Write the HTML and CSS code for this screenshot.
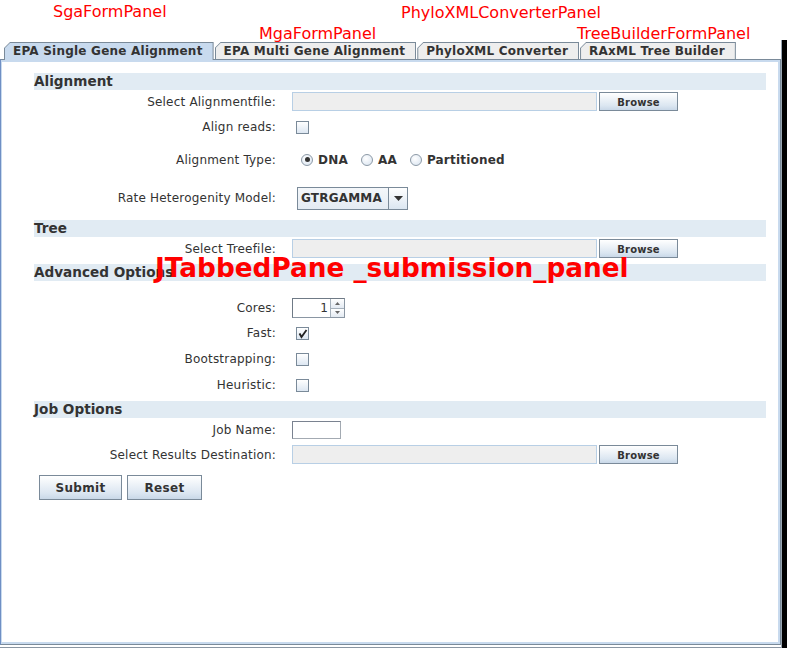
FILE: index.html
```html
<!DOCTYPE html>
<html>
<head>
<meta charset="utf-8">
<link rel="stylesheet" href="styles.css">
</head>
<body>
<div class="page">
  <div class="window">
    <div class="frame">
      <div class="tabbar">
        <div class="tab sel"><span>EPA Single Gene Alignment</span></div>
        <div class="tab"><span>EPA Multi Gene Alignment</span></div>
        <div class="tab"><span>PhyloXML Converter</span></div>
        <div class="tab"><span>RAxML Tree Builder</span></div>
      </div>
      <div class="panel">
        <div class="content">
          <div class="form">
            <div class="hdr h-align">Alignment</div>
            <div class="row r-file">
              <div class="lbl">Select Alignmentfile:</div>
              <div class="ctl"><div class="field"></div><div class="btn browse">Browse</div></div>
            </div>
            <div class="row r-align">
              <div class="lbl">Align reads:</div>
              <div class="ctl"><div class="cb"></div></div>
            </div>
            <div class="row r-type">
              <div class="lbl">Alignment Type:</div>
              <div class="ctl radios">
                <div class="radio on"><i></i><b>DNA</b></div>
                <div class="radio"><i></i><b>AA</b></div>
                <div class="radio"><i></i><b>Partitioned</b></div>
              </div>
            </div>
            <div class="row r-rate">
              <div class="lbl">Rate Heterogenity Model:</div>
              <div class="ctl">
                <div class="combo"><span class="combo-val">GTRGAMMA</span><span class="combo-arrow"><svg width="9" height="5" viewBox="0 0 9 5"><path d="M0 0 H9 L4.5 5 Z" fill="#333"/></svg></span></div>
              </div>
            </div>
            <div class="hdr h-tree">Tree</div>
            <div class="row r-file2">
              <div class="lbl">Select Treefile:</div>
              <div class="ctl"><div class="field"></div><div class="btn browse">Browse</div></div>
            </div>
            <div class="hdr h-adv">Advanced Options</div>
            <div class="row r-cores">
              <div class="lbl">Cores:</div>
              <div class="ctl">
                <div class="spinner">
                  <div class="spin-field">1</div>
                  <div class="spin-btns">
                    <div class="spin-b"><svg width="5" height="3" viewBox="0 0 5 3"><path d="M0 3 H5 L2.5 0 Z" fill="#666"/></svg></div>
                    <div class="spin-b"><svg width="5" height="3" viewBox="0 0 5 3"><path d="M0 0 H5 L2.5 3 Z" fill="#666"/></svg></div>
                  </div>
                </div>
              </div>
            </div>
            <div class="row r-fast">
              <div class="lbl">Fast:</div>
              <div class="ctl"><div class="cb"><svg width="11" height="11" viewBox="0 0 11 11"><path d="M2.5 5.5 L4.5 9 L9.5 2" fill="none" stroke="#222" stroke-width="1.8"/><path d="M2.5 5.5 L4 6 L4.6 8.8Z" fill="#222"/></svg></div></div>
            </div>
            <div class="row r-chk">
              <div class="lbl">Bootstrapping:</div>
              <div class="ctl"><div class="cb"></div></div>
            </div>
            <div class="row r-chk">
              <div class="lbl">Heuristic:</div>
              <div class="ctl"><div class="cb"></div></div>
            </div>
            <div class="hdr h-job">Job Options</div>
            <div class="row r-name">
              <div class="lbl">Job Name:</div>
              <div class="ctl"><div class="namefield"></div></div>
            </div>
            <div class="row r-dest">
              <div class="lbl">Select Results Destination:</div>
              <div class="ctl"><div class="field"></div><div class="btn browse">Browse</div></div>
            </div>
            <div class="actions">
              <div class="btn big submit">Submit</div>
              <div class="btn big reset">Reset</div>
            </div>
          </div>
        </div>
      </div>
    </div>
    <div class="dark"></div>
  </div>

  <div class="note n-sga">SgaFormPanel</div>
  <div class="note n-mga">MgaFormPanel</div>
  <div class="note n-phylo">PhyloXMLConverterPanel</div>
  <div class="note n-tree">TreeBuilderFormPanel</div>
  <div class="note-big">JTabbedPane _submission_panel</div>
</div>
</body>
</html>
```

FILE: styles.css
```css
* { box-sizing: border-box; }
html, body { margin: 0; padding: 0; background: #fff; }
body { font-family: "DejaVu Sans", "Noto Sans", sans-serif; color: #333; }

.page { position: relative; width: 787px; height: 648px; overflow: hidden; background: #fff; }

.window { display: flex; margin-top: 40px; height: 608px; }
.frame { width: 781px; display: flex; flex-direction: column; padding-top: 2px; padding-bottom: 2px; border-bottom: 1px solid #8a96a3; }
.dark { flex: 1; background: #000; border-left: 1px solid #9aa6b2; }

/* tabs */
.tabbar { display: flex; gap: 1px; padding-left: 4px; height: 18px; margin-bottom: -1px; position: relative; z-index: 1; }
.tab { height: 18px; background: #7a8a99; padding: 1px 1px 0 1px;
  clip-path: polygon(0 6px, 6px 0, 100% 0, 100% 100%, 0 100%); }
.tab span { display: block; height: 16px; background: #eeeeee; padding: 0 10px 0 8px;
  clip-path: polygon(0 5px, 5px 0, 100% 0, 100% 100%, 0 100%);
  font-weight: bold; font-size: 12px; line-height: 16px; letter-spacing: 0.22px; color: #333; white-space: nowrap; }
.tab.sel span { height: 17px; background: #c8daee; }

/* panel */
.panel { flex: 1; border: 1px solid #7a8a99; border-left-color: #6f8fc4; background: #c8daee; padding: 2px 2px 2px 1px; }
.content { background: #fff; height: 100%; padding-left: 32px; padding-top: 11px; }

.form { width: 732px; }

.hdr { height: 17px; background: #e1ebf3; font-weight: bold; font-size: 13.6px; line-height: 17px; color: #333; white-space: nowrap; }
.h-adv { margin-top: 6px; }
.h-job { margin-top: 3px; }

.row { display: grid; grid-template-columns: 242px 1fr; column-gap: 16px; align-items: center; }
.lbl { text-align: right; font-size: 12px; letter-spacing: 0.2px; color: #333; white-space: nowrap; }
.ctl { display: flex; align-items: center; }

.r-file { margin-top: 2px; height: 19px; }
.r-align { height: 32px; }
.r-type { height: 33px; }
.r-rate { height: 44px; }
.r-file2 { margin-top: 2px; height: 19px; }
.r-cores { margin-top: 17px; height: 19px; }
.r-fast { margin-top: 3px; height: 26px; }
.r-chk { height: 26px; }
.r-name { margin-top: 2px; height: 19px; }
.r-dest { margin-top: 6px; height: 19px; }

.field { width: 305px; height: 19px; background: #eeeeee; border: 1px solid #b8cfe5; }
.namefield { width: 49px; height: 18px; background: #fff; border: 1px solid #a3aab2; border-top-color: #7a8290; border-left-color: #7a8290; }

.btn { border: 1px solid #7a8a99; background: linear-gradient(#ffffff, #eef3f8 35%, #dbe6f1 75%, #c9d8e8);
  font-weight: bold; color: #333; text-align: center; white-space: nowrap; }
.browse { margin-left: 2px; width: 79px; height: 19px; font-size: 10px; line-height: 17px; padding-top: 1px; letter-spacing: 0.2px; }

.cb { width: 13px; height: 13px; margin-left: 4px; border: 1px solid #7a8a99;
  background: linear-gradient(#ffffff, #dde7f2); display: flex; align-items: center; justify-content: center; }

.radios { padding-left: 9px; }
.radio { display: flex; align-items: center; margin-right: 13px; }
.radio i { width: 12px; height: 12px; border-radius: 50%; border: 1px solid #8c99a6;
  background: radial-gradient(circle at 40% 35%, #ffffff, #d6e2ef); margin-right: 5px; position: relative; }
.radio.on i::after { content: ""; position: absolute; left: 2.5px; top: 2.5px; width: 5px; height: 5px; border-radius: 50%; background: #333; }
.radio b { font-size: 12px; font-weight: bold; letter-spacing: 0.2px; color: #333; }

.combo { margin-left: 5px; width: 111px; height: 23px; border: 1px solid #7a8a99; display: flex;
  background: linear-gradient(#f4f7fa, #e4ebf3); }
.combo-val { flex: 1; font-weight: bold; font-size: 12px; line-height: 20px; padding-left: 3px; letter-spacing: 0.2px; color: #333; border-right: 1px solid #7a8a99; }
.combo-arrow { width: 18px; display: flex; align-items: center; justify-content: center;
  background: linear-gradient(#ffffff, #dbe6f1); }

.spinner { width: 53px; height: 20px; display: flex; border: 1px solid #8a96a3; border-top-color: #6f7a86; border-left-color: #6f7a86; }
.spin-field { width: 37px; text-align: right; font-size: 12px; line-height: 18px; padding-right: 2px; color: #333; background: #fff; }
.spin-btns { flex: 1; display: flex; flex-direction: column; border-left: 1px solid #a5b0bb; }
.spin-b { flex: 1; display: flex; align-items: center; justify-content: center; background: linear-gradient(#fff, #e3eaf2); }
.spin-b + .spin-b { border-top: 1px solid #a5b0bb; }

.actions { display: flex; gap: 5px; margin-top: 11px; margin-left: 5px; }
.big { height: 25px; font-size: 12px; line-height: 23px; padding-top: 1px; letter-spacing: 0.3px; }
.submit { width: 83px; }
.reset { width: 75px; }

/* annotations */
.note { position: absolute; color: #f00; font-size: 16px; line-height: 15px; white-space: nowrap; }
.n-sga { left: 53px; top: 4px; }
.n-mga { left: 259px; top: 26px; }
.n-phylo { left: 401px; top: 5px; }
.n-tree { left: 577px; top: 26px; }
.note-big { position: absolute; left: 155px; top: 255px; color: #f00; font-weight: bold; font-size: 26.3px; line-height: 26px; white-space: nowrap; }
```
